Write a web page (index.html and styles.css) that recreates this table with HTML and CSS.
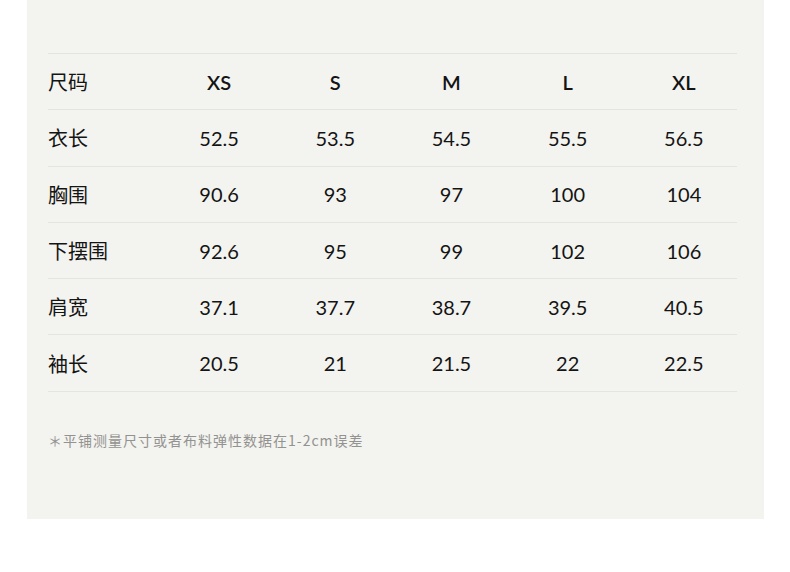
FILE: index.html
```html
<!DOCTYPE html>
<html lang="zh-CN">
<head>
<meta charset="utf-8">
<title>尺码表</title>
<link rel="stylesheet" href="styles.css">
</head>
<body>
<div class="panel">
  <div class="table">
    <div class="row head">
      <div class="label">尺码</div>
      <div class="cell">XS</div>
      <div class="cell">S</div>
      <div class="cell">M</div>
      <div class="cell">L</div>
      <div class="cell">XL</div>
    </div>
    <div class="row">
      <div class="label">衣长</div>
      <div class="cell">52.5</div>
      <div class="cell">53.5</div>
      <div class="cell">54.5</div>
      <div class="cell">55.5</div>
      <div class="cell">56.5</div>
    </div>
    <div class="row">
      <div class="label">胸围</div>
      <div class="cell">90.6</div>
      <div class="cell">93</div>
      <div class="cell">97</div>
      <div class="cell">100</div>
      <div class="cell">104</div>
    </div>
    <div class="row">
      <div class="label">下摆围</div>
      <div class="cell">92.6</div>
      <div class="cell">95</div>
      <div class="cell">99</div>
      <div class="cell">102</div>
      <div class="cell">106</div>
    </div>
    <div class="row">
      <div class="label">肩宽</div>
      <div class="cell">37.1</div>
      <div class="cell">37.7</div>
      <div class="cell">38.7</div>
      <div class="cell">39.5</div>
      <div class="cell">40.5</div>
    </div>
    <div class="row">
      <div class="label">袖长</div>
      <div class="cell">20.5</div>
      <div class="cell">21</div>
      <div class="cell">21.5</div>
      <div class="cell">22</div>
      <div class="cell">22.5</div>
    </div>
  </div>
  <p class="note">＊平铺测量尺寸或者布料弹性数据在1-2cm误差</p>
</div>
</body>
</html>
```

FILE: styles.css
```css
html, body {
  margin: 0;
  padding: 0;
  background: #ffffff;
}

.panel {
  margin-left: 27px;
  width: 737px;
  height: 519px;
  box-sizing: border-box;
  padding: 53px 0 0 21px;
  background: #f3f3ef;
}

.table {
  width: 689px;
  border-top: 1px solid #e5e5df;
}

.row {
  display: grid;
  grid-template-columns: 113px repeat(5, 116.2px);
  align-items: center;
  height: 55.3px;
  border-bottom: 1px solid #e5e5df;
}

.label {
  font-family: "Noto Sans CJK SC", "Noto Sans", sans-serif;
  font-size: 20px;
  font-weight: 400;
  color: #141414;
}

.cell {
  text-align: center;
  font-family: Lato, "Noto Sans", sans-serif;
  font-size: 20px;
  font-weight: 400;
  color: #141414;
}

.head .cell {
  font-weight: 600;
}

.note {
  margin: 38px 0 0;
  font-family: "Noto Sans CJK SC", "Noto Sans", sans-serif;
  font-size: 14px;
  letter-spacing: 1px;
  color: #929290;
  line-height: 20px;
}
```
